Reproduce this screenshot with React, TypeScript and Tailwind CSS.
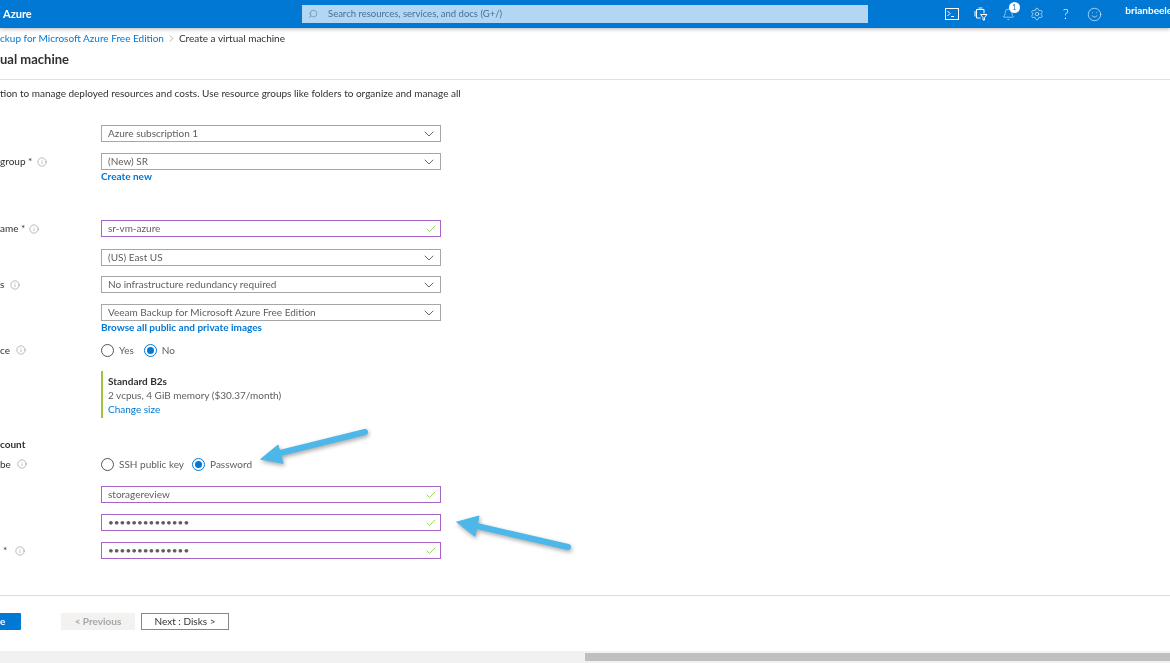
import React from "react";
import { Bell, Check, ChevronDown, ChevronRight, Info, Search, Settings, Smile } from "lucide-react";

function Label({ text, info = true, gap = "" }: { text?: string; info?: boolean; gap?: string }) {
  return (
    <div className={`w-[101px] shrink-0 flex items-center text-[10px] text-[#323130] ${gap}`}>
      {text && <span>{text}</span>}
      {info && <Info size={10} strokeWidth={1} className="text-[#605e5c]" />}
    </div>
  );
}

function SelectBox({ value }: { value: string }) {
  return (
    <div className="w-[340px] h-[17px] flex items-center justify-between pl-[6px] pr-[3px] border border-[#a6a6a6] text-[10px] text-[#605e5c] bg-white">
      <span>{value}</span>
      <ChevronDown size={16} strokeWidth={1.1} className="text-[#323130]" />
    </div>
  );
}

function InputBox({ value }: { value: string }) {
  return (
    <div className="w-[340px] h-[17px] flex items-center justify-between pl-[6px] pr-[3px] border border-[#a864c4] text-[10px] text-[#605e5c] bg-white">
      <span>{value}</span>
      <Check size={12} strokeWidth={1.6} className="text-[#8cc63f]" />
    </div>
  );
}

function Radio({ label, checked = false }: { label: string; checked?: boolean }) {
  return (
    <div className="flex items-center gap-[5px] text-[10px] text-[#605e5c]">
      <span className={`w-[13px] h-[13px] rounded-full border flex items-center justify-center ${checked ? "border-[#0078d4]" : "border-[#555555]"}`}>
        {checked && <span className="w-[7px] h-[7px] rounded-full bg-[#0078d4]" />}
      </span>
      <span>{label}</span>
    </div>
  );
}

function TerminalIcon() {
  return (
    <svg width="14" height="12" viewBox="0 0 14 12" fill="none" stroke="currentColor" strokeWidth="1">
      <rect x="0.5" y="0.5" width="13" height="11" />
      <path d="M2.5 3l2.5 2.5L2.5 8M6 8.5h3" />
    </svg>
  );
}

function DirectoryIcon() {
  return (
    <svg width="14" height="14" viewBox="0 0 14 14" fill="none" stroke="currentColor" strokeWidth="1">
      <path d="M2.5 2.5h7.5v4M2.5 2.5v8.5h4M1 4v5.5M4.5 1h4" />
      <path d="M6.5 7.5h6.5l-2.5 3v2.5h-1.5v-2.5z" />
    </svg>
  );
}

export default function App() {
  return (
    <div className="relative h-[663px] w-[1170px] overflow-hidden bg-white flex flex-col blur-[0.4px] font-['Lato',sans-serif]">
      {/* top bar */}
      <header className="h-[28px] shrink-0 bg-[#0078d4] flex items-center text-white shadow-[0_1px_4px_rgba(0,0,0,0.3)] z-10">
        <div className="w-[302px] shrink-0 pl-[3px] text-[11px] font-bold">Azure</div>
        <div className="w-[566px] shrink-0 h-[18px] bg-[#b3d6f2] flex items-center pl-[6px] gap-[10px] text-[9.5px] text-[#44709a]">
          <Search size={10} strokeWidth={1.2} className="-scale-x-100" />
          <span>Search resources, services, and docs (G+/)</span>
        </div>
        <div className="ml-[70px] shrink-0 flex items-center">
          <div className="w-[28.4px] flex justify-center"><TerminalIcon /></div>
          <div className="w-[28.4px] flex justify-center"><DirectoryIcon /></div>
          <div className="relative w-[28.4px] flex justify-center">
            <Bell size={13} strokeWidth={1} />
            <span className="absolute -top-[6px] left-[14px] w-[11px] h-[11px] rounded-full bg-white text-[#0078d4] text-[7px] leading-[11px] text-center">1</span>
          </div>
          <div className="w-[28.4px] flex justify-center"><Settings size={14} strokeWidth={1} /></div>
          <div className="w-[28.4px] flex justify-center text-[14px] leading-none font-light">?</div>
          <div className="w-[28.4px] flex justify-center"><Smile size={15} strokeWidth={1} /></div>
        </div>
        <div className="ml-[17px] -mt-[7px] text-[10px] font-bold whitespace-nowrap">brianbeele</div>
      </header>

      <main className="flex-1 min-h-0 flex flex-col">
        {/* breadcrumb + title */}
        <div className="mt-[4px] h-[12px] flex items-center text-[10px] whitespace-nowrap">
          <span className="text-[#0078d4]">ckup for Microsoft Azure Free Edition</span>
          <ChevronRight size={11} strokeWidth={1} className="mx-[2px] text-[#605e5c]" />
          <span className="text-[#323130]">Create a virtual machine</span>
        </div>
        <div className="mt-[5px] h-[31px] border-b border-[#e1e1e1] text-[13px] font-bold leading-[20px] text-[#323130]">ual machine</div>
        <p className="mt-[6px] h-[14px] leading-[14px] text-[10px] text-[#323130] whitespace-nowrap">
          tion to manage deployed resources and costs. Use resource groups like folders to organize and manage all
        </p>

        {/* form */}
        <div className="mt-[25px] flex flex-col">
          <div className="flex"><Label info={false} /><SelectBox value="Azure subscription 1" /></div>
          <div className="flex mt-[11px]"><Label text="group *" gap="gap-[5px]" /><SelectBox value="(New) SR" /></div>
          <div className="pl-[101px] h-[12px] leading-[12px] text-[10px] font-bold text-[#0078d4]">Create new</div>

          <div className="flex mt-[38px]"><Label text="ame *" gap="gap-[4px]" /><InputBox value="sr-vm-azure" /></div>
          <div className="flex mt-[12px]"><Label info={false} /><SelectBox value="(US) East US" /></div>
          <div className="flex mt-[10px]"><Label text="s" gap="gap-[6px]" /><SelectBox value="No infrastructure redundancy required" /></div>
          <div className="flex mt-[11px]"><Label info={false} /><SelectBox value="Veeam Backup for Microsoft Azure Free Edition" /></div>
          <div className="pl-[101px] h-[12px] leading-[12px] text-[10px] font-bold text-[#0078d4]">Browse all public and private images</div>

          <div className="flex mt-[10px] h-[14px]">
            <Label text="ce" gap="gap-[6px]" />
            <div className="flex gap-[10px]"><Radio label="Yes" /><Radio label="No" checked /></div>
          </div>

          <div className="ml-[101px] mt-[14px] w-[340px] h-[47px] border-l-2 border-[#9dc53b] pl-[5px] flex flex-col justify-center text-[10px] leading-[14px]">
            <span className="font-bold text-[#323130]">Standard B2s</span>
            <span className="text-[#605e5c]">2 vcpus, 4 GiB memory ($30.37/month)</span>
            <span className="text-[#0078d4]">Change size</span>
          </div>

          <div className="mt-[20px] h-[12px] leading-[12px] text-[10px] font-bold text-[#323130]">count</div>
          <div className="flex mt-[7px] h-[14px]">
            <Label text="be" gap="gap-[6px]" />
            <div className="flex gap-[8px]"><Radio label="SSH public key" /><Radio label="Password" checked /></div>
          </div>
          <div className="flex mt-[15px]"><Label info={false} /><InputBox value="storagereview" /></div>
          <div className="flex mt-[11px]"><Label info={false} /><InputBox value="••••••••••••••" /></div>
          <div className="flex mt-[11px]"><Label text="*" gap="gap-[8px] pl-[3px]" /><InputBox value="••••••••••••••" /></div>
        </div>

        {/* footer buttons */}
        <div className="mt-[36px] border-t border-[#dcdcdc] pt-[17px] flex items-center text-[10px]">
          <div className="w-[21px] h-[17px] bg-[#0078d4] rounded-r-[1px] text-white font-bold flex items-center">e</div>
          <div className="ml-[40px] w-[74px] h-[17px] bg-[#f3f2f1] text-[#a6a6a6] font-bold flex items-center justify-center">&lt; Previous</div>
          <div className="ml-[6px] w-[88px] h-[17px] border border-[#8a8886] text-[#323130] flex items-center justify-center">Next : Disks &gt;</div>
        </div>
      </main>

      {/* scrollbar */}
      <div className="h-[12px] shrink-0 bg-[#f1f1f1] flex items-center">
        <div className="ml-[585px] w-[585px] h-[8px] bg-[#bfbfbf]" />
      </div>

      {/* callout arrows */}
      <svg className="absolute inset-0 pointer-events-none drop-shadow-[1px_2px_2px_rgba(0,0,0,0.35)]" width="1170" height="663" viewBox="0 0 1170 663" fill="#4db7ea" stroke="#4db7ea" strokeLinecap="round" strokeLinejoin="round">
        <path d="M365 432L280 453" strokeWidth="6" fill="none" />
        <path d="M261 459L278 445L283 463Z" strokeWidth="1" />
        <path d="M568 547L477 526" strokeWidth="6" fill="none" />
        <path d="M457 522L479 516L475 536Z" strokeWidth="1" />
      </svg>
    </div>
  );
}
